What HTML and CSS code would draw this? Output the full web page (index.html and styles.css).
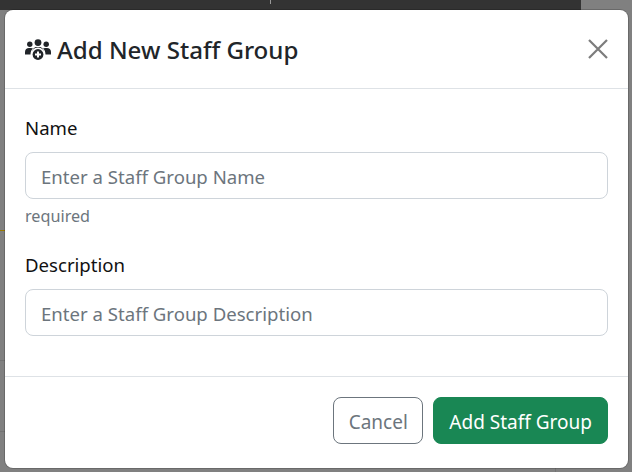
FILE: index.html
```html
<!DOCTYPE html>
<html lang="en">
<head>
<meta charset="utf-8">
<title>Add New Staff Group</title>
<link rel="stylesheet" href="styles.css">
</head>
<body>
<div class="backdrop-top"><span class="tick"></span></div>
<div class="line line-amber"></div>
<div class="line line-a"></div>
<div class="line line-b"></div>
<div class="tick-bottom"></div>
<main class="modal">
  <header class="modal-header">
    <h1 class="modal-title">
      <svg class="title-icon" viewBox="0 0 26 22" aria-hidden="true">
        <circle cx="13" cy="3.6" r="3.4"/>
        <circle cx="4.8" cy="5.2" r="2.7"/>
        <circle cx="21.2" cy="5.2" r="2.7"/>
        <path d="M0 15.5v-2.6C0 10.4 1.8 9 4 9h2c.8 0 1.4.2 2 .5-1.5 1.2-2.4 3-2.5 6z"/>
        <path d="M26 15.5v-2.6C26 10.4 24.200 9 22 9h-2c-.8 0-1.400.2-2 .5 1.500 1.200 2.400 3 2.500 6z"/>
        <path d="M7 15.500v-1.300C7 10.500 9 8 11.500 8h3C17 8 19 10.500 19 14.200v1.300z"/>
        <circle cx="13" cy="15.500" r="7" class="ring"/>
        <circle cx="13" cy="15.500" r="5.400"/>
        <path class="plus" d="M13 12.500v6M10 15.500h6"/>
      </svg>
      <span>Add New Staff Group</span>
    </h1>
    <button class="close" type="button" aria-label="Close">
      <svg viewBox="0 0 20 20" aria-hidden="true"><path d="M1 1l18 18M19 1L1 19"/></svg>
    </button>
  </header>
  <form class="modal-body">
    <div class="field">
      <label class="label" for="n">Name</label>
      <input class="input" id="n" placeholder="Enter a Staff Group Name">
      <small class="hint">required</small>
    </div>
    <div class="field">
      <label class="label" for="d">Description</label>
      <input class="input" id="d" placeholder="Enter a Staff Group Description">
    </div>
  </form>
  <footer class="modal-footer">
    <button class="btn btn-cancel" type="button">Cancel</button>
    <button class="btn btn-add" type="button">Add Staff Group</button>
  </footer>
</main>
</body>
</html>
```

FILE: styles.css
```css
* { box-sizing: border-box; }
html, body { height: 100%; }
body {
  margin: 0;
  height: 472px;
  overflow: hidden;
  background: #808080;
  font-family: "Noto Sans", "Open Sans", sans-serif;
  color: #212529;
  padding: 10px 4px 4px 5px;
  position: relative;
}
.backdrop-top {
  position: absolute; left: 0; top: 0; width: 581px; height: 10px;
  background: #333;
}
.tick { position: absolute; left: 270px; top: 0; width: 1px; height: 4px; background: #999; }
.line { position: absolute; left: 0; width: 5px; height: 1px; }
.line-amber { top: 230px; background: #997a00; }
.line-a { top: 360px; background: #737373; }
.line-b { top: 431px; background: #737373; }
.tick-bottom { position: absolute; left: 555px; top: 468px; width: 1px; height: 4px; background: #737373; }
.modal {
  position: relative;
  height: 458px;
  width: 623px;
  background: #fff;
  border-radius: 8px;
  box-shadow: 0 0 0 1px rgba(0, 0, 0, 0.175);
  display: flex;
  flex-direction: column;
}
.modal-header {
  height: 79px;
  border-bottom: 1px solid #dee2e6;
  display: flex;
  align-items: center;
  justify-content: space-between;
  padding: 0 20px 0 20px;
}
.modal-title {
  margin: 0;
  padding-top: 2px;
  display: flex;
  align-items: center;
  gap: 6px;
  font-size: 24.1px;
  font-weight: 500;
  line-height: 1.2;
}
.title-icon { width: 26px; height: 22px; fill: #212529; }
.title-icon .ring { fill: #fff; }
.title-icon .plus { stroke: #fff; stroke-width: 2; fill: none; }
.close { width: 20px; height: 20px; padding: 0; border: 0; background: none; display: block; }
.close svg { width: 20px; height: 20px; display: block; fill: none; stroke: #7c7c7c; stroke-width: 2.2; }
.modal-body { flex: 1; padding: 26px 20px 0; display: flex; flex-direction: column; gap: 25px; }
.field { display: flex; flex-direction: column; }
.label { font-size: 18.6px; line-height: 26px; color: #111; margin-bottom: 11px; }
.input {
  height: 47px;
  border: 1px solid #ced4da;
  border-radius: 8px;
  padding: 2px 15px 0;
  font: inherit;
  font-size: 18.6px;
  color: #212529;
  background: #fff;
  width: 100%;
}
.input::placeholder { color: #6c757d; opacity: 1; }
.hint { font-size: 16.2px; color: #6c757d; line-height: 22px; margin-top: 6px; }
.modal-footer {
  height: 92px;
  border-top: 1px solid #dee2e6;
  display: flex;
  align-items: center;
  justify-content: flex-end;
  gap: 10px;
  padding: 0 20px 4px;
}
.btn {
  height: 47px;
  border-radius: 8px;
  font: inherit;
  font-size: 19px;
  padding: 2px 15px 0;
}
.btn-cancel { background: #fff; border: 1px solid #6c757d; color: #6c757d; padding: 2px 14.5px 0; }
.btn-add { background: #198754; border: 1px solid #198754; color: #fff; }
```
